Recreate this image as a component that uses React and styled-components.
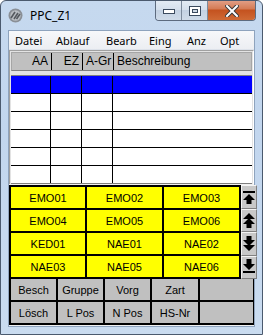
import React from 'react';
import styled, { createGlobalStyle } from 'styled-components';

const GlobalStyle = createGlobalStyle`
  html, body { margin: 0; padding: 0; background: #ffffff; }
  body { font-family: "Liberation Sans", Arial, sans-serif; }
`;

const menuItems = ['Datei', 'Ablauf', 'Bearb', 'Eing', 'Anz', 'Opt'];
const columns = [
  { label: 'AA', width: 40, align: 'right' },
  { label: 'EZ', width: 31, align: 'right' },
  { label: 'A-Gr', width: 31, align: 'right' },
  { label: 'Beschreibung', width: 142, align: 'left' },
];
const keys = [
  ['EMO01', 'EMO02', 'EMO03'],
  ['EMO04', 'EMO05', 'EMO06'],
  ['KED01', 'NAE01', 'NAE02'],
  ['NAE03', 'NAE05', 'NAE06'],
];
const actions = [
  ['Besch', 'Gruppe', 'Vorg', 'Zart', ''],
  ['Lösch', 'L Pos', 'N Pos', 'HS-Nr', ''],
];
const colTemplate = columns.map((c) => `${c.width}px`).join(' ');

export default function App() {
  return (
    <>
      <GlobalStyle />
      <Window>
        <TitleBar>
          <AppIcon />
          <Title>PPC_Z1</Title>
          <Caption>
            <CapBtn>
              <svg width="12" height="6" viewBox="0 0 12 6">
                <rect x="0.5" y="1.5" width="11" height="4" fill="#fff" stroke="#3b4a5e" />
              </svg>
            </CapBtn>
            <CapBtn>
              <svg width="12" height="10" viewBox="0 0 12 10">
                <rect x="0.5" y="0.5" width="11" height="9" fill="#fff" stroke="#3b4a5e" />
                <rect x="3.5" y="3.5" width="5" height="3" fill="#cfd8e3" stroke="#3b4a5e" />
              </svg>
            </CapBtn>
            <CloseBtn>
              <svg width="14" height="12" viewBox="0 0 14 12">
                <path d="M2 1 L12 11 M12 1 L2 11" stroke="#3a3a3a" strokeWidth="4" strokeLinecap="square" />
                <path d="M2 1 L12 11 M12 1 L2 11" stroke="#ffffff" strokeWidth="2" strokeLinecap="square" />
              </svg>
            </CloseBtn>
          </Caption>
        </TitleBar>

        <Client>
          <MenuBar>
            {menuItems.map((m) => (
              <MenuItem key={m}>{m}</MenuItem>
            ))}
          </MenuBar>

          <TablePanel>
            <HeaderRow>
              {columns.map((c) => (
                <HeadCell key={c.label} $align={c.align}>{c.label}</HeadCell>
              ))}
            </HeaderRow>
            <Grid>
              {[0, 1, 2, 3, 4, 5].map((r) => (
                <GridRow key={r} $selected={r === 0}>
                  {columns.map((c) => (
                    <GridCell key={c.label} />
                  ))}
                </GridRow>
              ))}
            </Grid>
            <HScroll />
          </TablePanel>

          <KeyArea>
            <KeyGrid>
              {keys.flat().map((k) => (
                <KeyBtn key={k}>{k}</KeyBtn>
              ))}
            </KeyGrid>
            <ScrollCol>
              <ScrollBtn><ArrowIcon kind="top" /></ScrollBtn>
              <ScrollBtn><ArrowIcon kind="pgup" /></ScrollBtn>
              <ScrollBtn><ArrowIcon kind="pgdn" /></ScrollBtn>
              <ScrollBtn><ArrowIcon kind="bottom" /></ScrollBtn>
            </ScrollCol>
          </KeyArea>

          <ActionGrid>
            {actions.flat().map((a, i) => (
              <ActionBtn key={i}>{a}</ActionBtn>
            ))}
          </ActionGrid>
        </Client>
      </Window>
    </>
  );
}

function AppIcon() {
  return (
    <svg width="15" height="15" viewBox="0 0 15 15" style={{ marginRight: 7 }}>
      <circle cx="7.5" cy="7.5" r="7" fill="#8a8f96" />
      <circle cx="7.5" cy="7.5" r="5.2" fill="#b9bdc2" />
      <path d="M3 10 L7 4 M6 11 L10 5 M8.5 11 L12 6" stroke="#55595f" strokeWidth="1.6" />
    </svg>
  );
}

function ArrowIcon({ kind }) {
  const paths = {
    top: 'M1 2 H13 V4 H1 Z M7 5 L13 11 H9.5 V15 H4.5 V11 H1 Z',
    pgup: 'M7 1 L13 7 H1 Z M7 6 L13 12 H9.5 V16 H4.5 V12 H1 Z',
    pgdn: 'M4.5 0 H9.5 V4 H13 L7 10 L1 4 H4.5 Z M1 9 H13 L7 15 Z',
    bottom: 'M4.5 0 H9.5 V5 H13 L7 11 L1 5 H4.5 Z M1 12 H13 V14 H1 Z',
  };
  return (
    <svg width="14" height="16" viewBox="0 0 14 16">
      <path d={paths[kind]} fill="#000" />
    </svg>
  );
}

const Window = styled.div`
  width: 263px;
  height: 335px;
  box-sizing: border-box;
  border: 1px solid #4b5a6e;
  border-radius: 6px 6px 0 0;
  background: linear-gradient(180deg, #c6d9ef 0%, #c2d6ee 40%, #cadcf0 100%);
  display: flex;
  flex-direction: column;
  overflow: hidden;
`;

const TitleBar = styled.div`
  height: 28px;
  display: flex;
  align-items: flex-start;
  padding-left: 7px;
  box-sizing: border-box;
  & > svg { margin-top: 7px; }
`;

const Title = styled.div`
  margin-top: 7px;
  font-family: "Noto Sans", "Open Sans", sans-serif;
  font-size: 12px;
  color: #000;
  line-height: 16px;
  flex: 1;
`;

const Caption = styled.div`
  display: flex;
  margin-right: 6px;
  margin-top: -1px;
  height: 20px;
  border: 1px solid #5d6b7f;
  border-top: none;
  border-radius: 0 0 4px 4px;
  overflow: hidden;
`;

const CapBtn = styled.div`
  width: 26px;
  display: flex;
  align-items: center;
  justify-content: center;
  padding-top: 2px;
  box-sizing: border-box;
  background: linear-gradient(180deg, #e4ecf5 0%, #d4dfec 50%, #c3d1e2 51%, #cfdbe9 100%);
  border-right: 1px solid #7c8a9c;
`;

const CloseBtn = styled(CapBtn)`
  width: 47px;
  border-right: none;
  background: linear-gradient(180deg, #e3a28a 0%, #d47a54 45%, #c4521f 50%, #cf6a35 100%);
`;

const Client = styled.div`
  flex: 1;
  margin: 1px 7px 7px 7px;
  border: 1px solid #8ea3bd;
  background: #f0f0f0;
  display: flex;
  flex-direction: column;
`;

const MenuBar = styled.div`
  height: 18px;
  display: grid;
  grid-template-columns: 41px 50px 43px 38px 33px 1fr;
  align-items: center;
  padding-left: 6px;
  background: linear-gradient(180deg, #f7f8fa 0%, #eceef2 100%);
  border-bottom: 1px solid #dde2ea;
`;

const MenuItem = styled.div`
  font-family: "Noto Sans", "Open Sans", sans-serif;
  font-size: 11px;
  color: #000;
  white-space: nowrap;
`;

const TablePanel = styled.div`
  height: 132px;
  background: #e3e3e3;
  border-top: 1px solid #a0a0a0;
  border-left: 1px solid #a0a0a0;
  border-right: 1px solid #ffffff;
  padding: 1px 1px 0 1px;
  display: flex;
  flex-direction: column;
`;

const HeaderRow = styled.div`
  display: grid;
  grid-template-columns: ${colTemplate};
  height: 18px;
  background: #c0c0c0;
  border: 1px solid #a6a6a6;
  border-bottom: 1px solid #808080;
`;

const HeadCell = styled.div`
  font-family: "Liberation Sans", Arial, sans-serif;
  font-size: 12px;
  line-height: 17px;
  color: #000;
  text-align: ${(p) => p.$align};
  padding: 0 3px;
  border-right: 1px solid #000;
  white-space: nowrap;
  overflow: hidden;
  &:last-child { border-right: none; }
`;

const Grid = styled.div`
  margin-top: 4px;
  display: flex;
  flex-direction: column;
  background: #fff;
  border-top: 1px solid #808080;
`;

const GridRow = styled.div`
  display: grid;
  grid-template-columns: ${colTemplate};
  height: 17px;
  border-bottom: 1px solid #000;
  background: ${(p) => (p.$selected ? '#0000ff' : '#ffffff')};
  &:last-child { border-bottom: none; }
`;

const GridCell = styled.div`
  border-right: 1px solid #000;
  &:last-child { border-right: none; }
`;

const HScroll = styled.div`
  height: 5px;
  background: #808080;
`;

const KeyArea = styled.div`
  display: flex;
  margin-top: 1px;
`;

const KeyGrid = styled.div`
  display: grid;
  grid-template-columns: 74px 75px 75px;
  grid-auto-rows: 21px;
  gap: 2px;
  background: #000;
  border: 2px solid #000;
  border-right: none;
  width: 228px;
`;

const KeyBtn = styled.div`
  background: #ffff00;
  display: flex;
  align-items: center;
  justify-content: center;
  font-family: "Liberation Sans", Arial, sans-serif;
  font-size: 11px;
  color: #000;
`;

const ScrollCol = styled.div`
  flex: 1;
  display: flex;
  flex-direction: column;
  background: #d4d4d4;
  border-left: 2px solid #000;
`;

const ScrollBtn = styled.div`
  flex: 1;
  display: flex;
  align-items: center;
  justify-content: center;
  background: #c8c8c8;
  border-top: 1px solid #f4f4f4;
  border-left: 1px solid #f4f4f4;
  border-right: 1px solid #808080;
  border-bottom: 1px solid #808080;
`;

const ActionGrid = styled.div`
  display: grid;
  grid-template-columns: 45px 45px 45px 46px 1fr;
  grid-auto-rows: 21px;
  gap: 2px;
  background: #000;
  border: 2px solid #000;
  border-top: none;
  border-right: 1px solid #000;
`;

const ActionBtn = styled.div`
  background: #c0c0c0;
  display: flex;
  align-items: center;
  justify-content: center;
  font-family: "Liberation Sans", Arial, sans-serif;
  font-size: 11px;
  color: #000;
`;
